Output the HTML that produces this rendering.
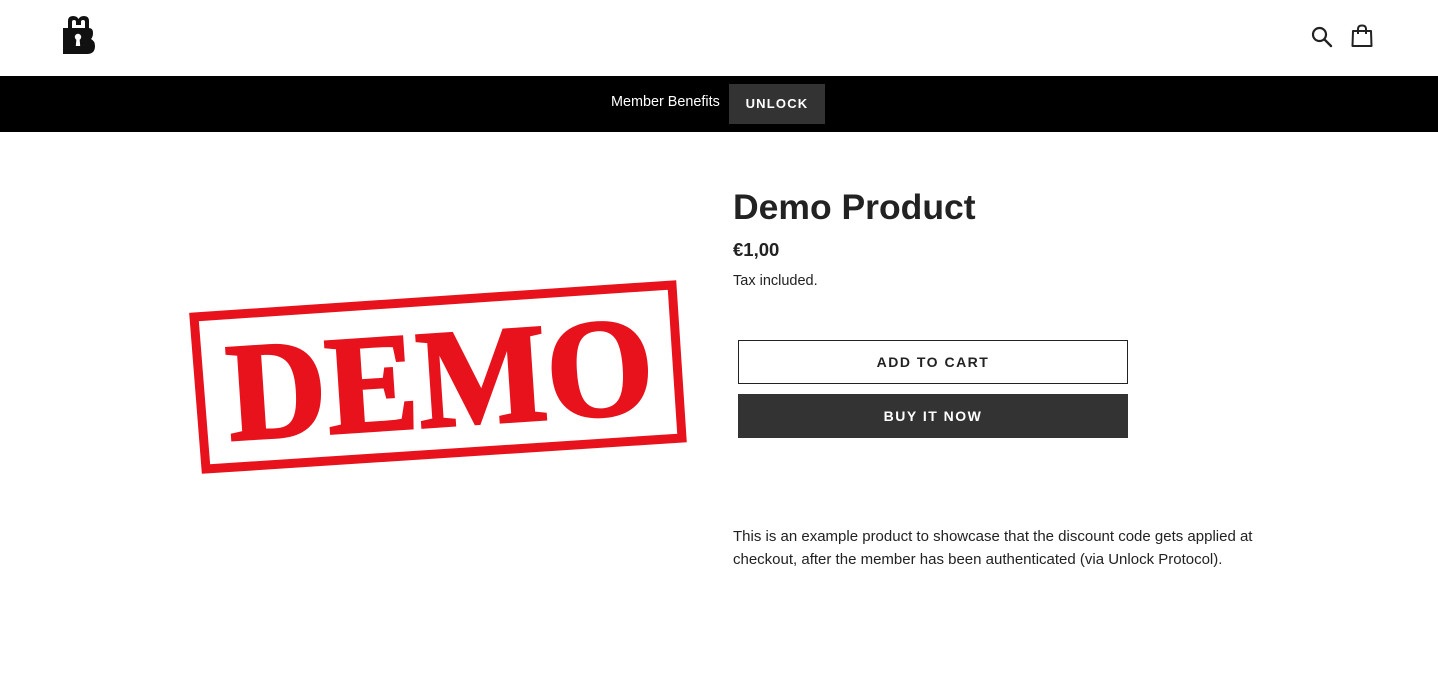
<!DOCTYPE html>
<html><head><meta charset="utf-8"><style>
body{margin:0;background:#fff;font-family:"Liberation Sans",sans-serif;color:#222;width:1438px;height:677px;overflow:hidden;position:relative}
.hdr{height:76px;position:relative}
.bar{position:absolute;top:76px;left:0;width:1438px;height:56px;background:#000}
.bar .t{position:absolute;left:611px;top:18px;color:#fff;font-size:14.4px}
.bar .b{position:absolute;left:729px;top:8px;width:96px;height:40px;background:#333;color:#fff;font-weight:bold;font-size:13px;letter-spacing:1.2px;text-align:center;line-height:40px}
h1{position:absolute;left:733px;top:187px;margin:0;font-size:35.5px;font-weight:bold;color:#222}
.price{position:absolute;left:733px;top:239px;font-size:18.5px;font-weight:bold}
.tax{position:absolute;left:733px;top:273px;font-size:14.5px}
.btn{position:absolute;left:738px;width:390px;height:44px;box-sizing:border-box;text-align:center;font-weight:bold;font-size:14px;letter-spacing:1.5px;line-height:42px}
.add{top:340px;border:1px solid #222;color:#222}
.buy{top:394px;background:#333;color:#fff;line-height:44px}
.desc{position:absolute;left:733px;top:525px;font-size:15px;line-height:23px;width:560px}
</style></head><body>
<div class="hdr">
<svg style="position:absolute;left:62px;top:15px" width="34" height="40" viewBox="0 0 34 40">
<path d="M6 14 V6 Q6 1 11 1 Q15 1 16.5 4 Q18 1 22 1 Q27 1 27 6 V14 H23 V7 Q23 5 21 5 Q19 5 19 7 V10 H14 V7 Q14 5 12 5 Q10 5 10 7 V14 Z" fill="#111"/>
<path d="M1 13 H27 Q31 13 31 18 Q31 22 29 24 Q33 26 33 31 Q33 39 25 39 H1 Z" fill="#111"/>
<circle cx="16" cy="22" r="3.2" fill="#fff"/><path d="M14.5 23 L13.8 31 H18.2 L17.5 23Z" fill="#fff"/>
</svg>
<svg style="position:absolute;left:1311px;top:26px" width="22" height="22" viewBox="0 0 22 22"><circle cx="8.5" cy="8.5" r="6.5" fill="none" stroke="#222" stroke-width="2.2"/><path d="M13.3 13.3 L20 20" stroke="#222" stroke-width="2.4" stroke-linecap="round"/></svg>
<svg style="position:absolute;left:1351px;top:24px" width="22" height="24" viewBox="0 0 22 24"><path d="M2 7 H20 L20.5 22 H1.5 Z" fill="none" stroke="#222" stroke-width="2" stroke-linejoin="round"/><path d="M7 10 V5 Q7 1.5 11 1.5 Q15 1.5 15 5 V10" fill="none" stroke="#222" stroke-width="2"/></svg>
</div>
<div class="bar"><span class="t">Member Benefits</span><div class="b">UNLOCK</div></div>
<svg style="position:absolute;left:0;top:0" width="1438" height="677">
<polygon points="194,317 672,285 682,438 206,469" fill="none" stroke="#e8121c" stroke-width="9"/>
<text transform="translate(440,378) rotate(-3.8) scale(0.98,1)" x="0" y="48" text-anchor="middle" font-family="Liberation Serif" font-weight="bold" font-size="140" fill="#e8121c" stroke="#e8121c" stroke-width="3">DEMO</text>
</svg>
<h1>Demo Product</h1>
<div class="price">€1,00</div>
<div class="tax">Tax included.</div>
<div class="btn add">ADD TO CART</div>
<div class="btn buy">BUY IT NOW</div>
<div class="desc">This is an example product to showcase that the discount code gets applied at checkout, after the member has been authenticated (via Unlock Protocol).</div>
</body></html>
